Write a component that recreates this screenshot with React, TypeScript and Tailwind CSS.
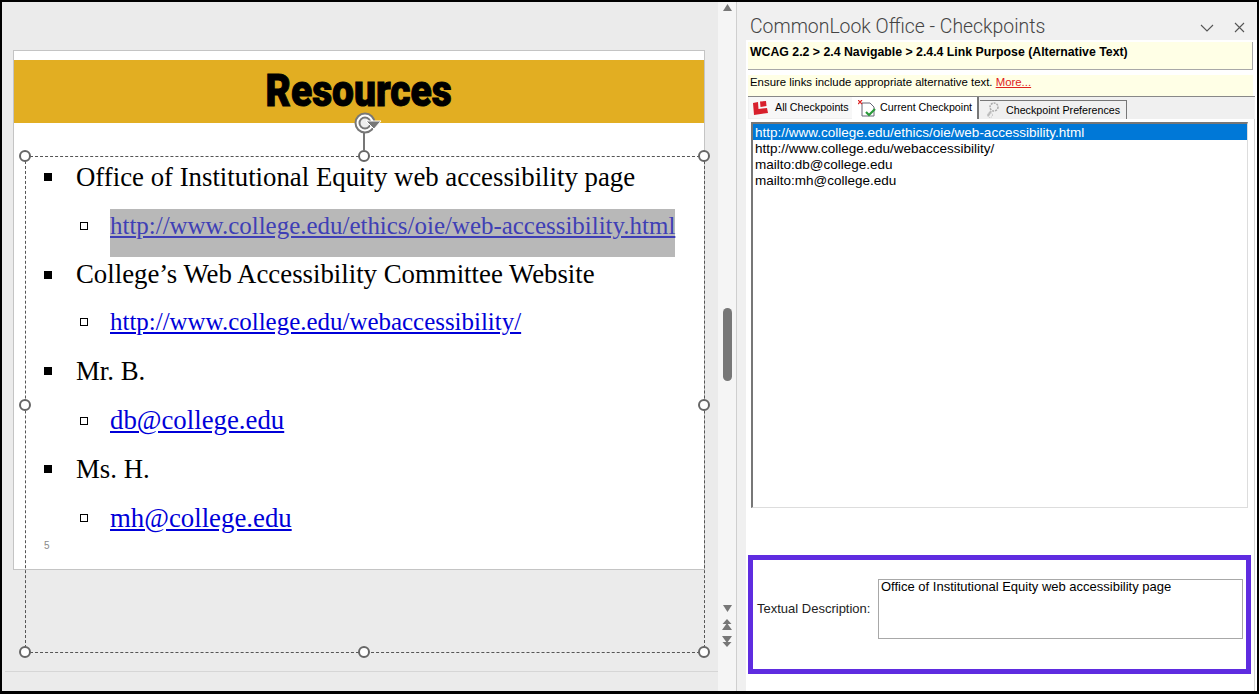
const handles = [
  "left-[-7px] top-[-7px]",
  "left-[332px] top-[-7px]",
  "right-[-6px] top-[-7px]",
  "left-[-7px] top-[242px]",
  "right-[-6px] top-[242px]",
  "left-[-7px] bottom-[-6px]",
  "left-[332px] bottom-[-6px]",
  "right-[-6px] bottom-[-6px]",
];

function L1({ children, h = "h-[48.7px]" }: { children: React.ReactNode; h?: string }) {
  return (
    <div className={h + " flex items-center pl-[30px] text-[26.8px]"}>
      <span className="w-2 h-2 bg-black mr-[24px] shrink-0" />
      <span className="whitespace-nowrap">{children}</span>
    </div>
  );
}

function L2({ children, small, h = "h-[48.7px]" }: { children: React.ReactNode; small?: boolean; h?: string }) {
  return (
    <div className={h + " flex items-center pl-[66px]"}>
      <span className="w-[8px] h-[8px] border-[1.5px] border-black mr-[22px] shrink-0 bg-white" />
      <span className={small ? "text-[#0000d8] underline text-[24.95px] whitespace-nowrap" : "text-[#0000d8] underline text-[26.8px] whitespace-nowrap"}>
        {children}
      </span>
    </div>
  );
}

function SelectedLink({ children }: { children: React.ReactNode }) {
  return (
    <div className="h-[48.7px] flex items-start pl-[66px]">
      <span className="w-[8px] h-[8px] border-[1.5px] border-black mr-[22px] mt-[20px] shrink-0 bg-white" />
      <span className="mt-[7px] h-[48px] w-[565px] pt-[5px] bg-[#b8b8b8] text-[#3f3fb5] underline text-[24.95px] leading-[24px] whitespace-nowrap">
        {children}
      </span>
    </div>
  );
}

const rows = [
  "http://www.college.edu/webaccessibility/",
  "mailto:db@college.edu",
  "mailto:mh@college.edu",
];

export default function App() {
  return (
    <div className="w-[1259px] h-[694px] bg-black pt-[2px] pl-[2px] pr-[2px] pb-[3px] overflow-hidden">
      <div className="h-full flex font-['Liberation_Sans',sans-serif]">
        <div className="w-[716px] h-full bg-[#ebebeb] flex flex-col">
          <div className="flex-1 pl-[11px] pt-[48px]">
            <div className="relative w-[692px] h-[520px] bg-white border border-[#c4c4c4] pt-[9px]">
              <div className="h-[63px] bg-[#e2ae22] flex items-center justify-center pb-[3px]">
                <span className="font-['Roboto',sans-serif] font-black text-[45px] leading-none text-black scale-x-[0.865] [-webkit-text-stroke:1px_black]">
                  Resources
                </span>
              </div>
              <div className="pt-[30px] font-['Liberation_Serif',serif] leading-none text-black">
                <L1>Office of Institutional Equity web accessibility page</L1>
                <SelectedLink>http://www.college.edu/ethics/oie/web-accessibility.html</SelectedLink>
                <L1>College’s Web Accessibility Committee Website</L1>
                <L2 small h="h-[46.7px]">http://www.college.edu/webaccessibility/</L2>
                <L1 h="h-[50.7px]">Mr. B.</L1>
                <L2>db@college.edu</L2>
                <L1>Ms. H.</L1>
                <L2>mh@college.edu</L2>
              </div>
              <div className="absolute left-[30px] top-[487px] text-[10px] text-[#8a8a8a]">5</div>

              <div className="absolute left-[11px] top-[105px] w-[680px] h-[497px] border border-dashed border-[#555]">
                {handles.map((h) => (
                  <span key={h} className={"absolute w-[12px] h-[12px] rounded-full bg-white border-2 border-[#666] " + h} />
                ))}
                <span className="absolute left-[337px] top-[-25px] w-[2px] h-[19px] bg-[#777]" />
                <svg className="absolute left-[328px] top-[-45px]" width="28" height="22" viewBox="0 0 28 22" fill="none">
                  <circle cx="11" cy="11" r="9.5" stroke="#777" strokeWidth="2" fill="#fff" />
                  <circle cx="11" cy="11" r="5.5" stroke="#777" strokeWidth="2" fill="#eee" />
                  <path d="M12 9h15l-7 8z" fill="#777" stroke="#fff" strokeWidth="1" />
                </svg>
              </div>
            </div>
          </div>
          <div className="h-[20px] ml-[3px] border-t border-[#d6d6d6]" />
        </div>

        <div className="w-[19px] h-full bg-[#f5f5f5] flex flex-col items-center border-r border-[#cfcfcf]">
          <svg className="mt-[2px]" width="9" height="7" viewBox="0 0 9 7"><path d="M4.5 0L9 7H0z" fill="#777" /></svg>
          <div className="mt-[297px] w-[9px] h-[73px] rounded-full bg-[#777]" />
          <svg className="mt-[224px]" width="9" height="7" viewBox="0 0 9 7"><path d="M0 0h9L4.5 7z" fill="#777" /></svg>
          <svg className="mt-[7px]" width="10" height="11" viewBox="0 0 10 11"><path d="M5 0L9.5 5H.5zM5 4L10 11H0z" fill="#777" /></svg>
          <svg className="mt-[6px]" width="10" height="11" viewBox="0 0 10 11"><path d="M0 0h10L5 7zM.5 6h9L5 11z" fill="#777" /></svg>
        </div>

        <div className="w-[9px] h-full bg-[#f0f0f0]" />

        <div className="flex-1 h-full bg-white flex flex-col overflow-hidden">
          <div className="h-[38px] shrink-0 bg-[#f0f0f0] flex items-center pl-[4px] pt-[12px] font-['Roboto',sans-serif] font-light text-[19.4px] text-[#444] relative">
            <span>CommonLook Office - Checkpoints</span>
            <svg className="absolute left-[454px] top-[22px]" width="14" height="9" viewBox="0 0 14 9" fill="none"><path d="M1 1l6 6 6-6" stroke="#555" strokeWidth="1.1" /></svg>
            <svg className="absolute left-[488px] top-[20px]" width="11" height="11" viewBox="0 0 11 11" fill="none"><path d="M1 1l9 9M10 1l-9 9" stroke="#555" strokeWidth="1.1" /></svg>
          </div>
          <div className="h-[28px] shrink-0 mt-[2px] ml-[2px] w-[505px] bg-[#ffffe6] border-b border-r border-[#a8a8a8] pl-[2px] pt-[2px] text-[12.3px] leading-[16px] font-bold text-black">
            WCAG 2.2 &gt; 2.4 Navigable &gt; 2.4.4 Link Purpose (Alternative Text)
          </div>
          <div className="h-[21px] shrink-0 mt-[5px] ml-[2px] w-[505px] bg-[#ffffe6] pl-[2px] pb-[6px] flex items-center text-[11.4px] text-black">
            Ensure links include appropriate alternative text.&nbsp;<span className="text-[#e0201c] underline">More...</span>
          </div>

          <div className="h-[23px] w-[507px] shrink-0 flex items-end border-t border-[#888] ml-[2px] bg-[#f0f0f0] text-[10.7px] text-black">
            <div className="h-[21px] mb-[1px] ml-[1px] w-[103px] flex items-center bg-[#f7f7f7] pl-[3px] gap-[7px]">
              <svg width="16" height="14" viewBox="0 0 16 14"><path d="M1 2l5-1 .5 7 8.5-1 1 5-14 2zM8 .5l6-.5.5 5L8.5 6z" fill="#d8202c" /></svg>
              <span className="whitespace-nowrap">All Checkpoints</span>
            </div>
            <div className="h-[22px] w-[127px] flex items-center bg-white border-r-2 border-[#777] pl-[6px] gap-[4px]">
              <svg width="18" height="17" viewBox="0 0 18 17" fill="none">
                <path d="M4 3h8l4 4v9H4z" stroke="#667" strokeWidth="1" fill="#fff" />
                <path d="M0 0l4 4M4 0L0 4" stroke="#d22" strokeWidth="1.2" />
                <path d="M8 12l3 3 6-6" stroke="#2a9a3a" strokeWidth="2.2" />
              </svg>
              <span className="whitespace-nowrap mb-[2px]">Current Checkpoint</span>
            </div>
            <div className="h-[19px] w-[147px] ml-[1px] flex items-center bg-[#f0f0f0] border-r border-t border-[#777] pl-[6px] gap-[6px]">
              <svg width="14" height="17" viewBox="0 0 14 17" fill="none">
                <circle cx="8" cy="5" r="4" stroke="#aaa" strokeWidth="1.5" strokeDasharray="2 1" />
                <path d="M5 9l-3 5" stroke="#bbb" strokeWidth="2" />
                <circle cx="4" cy="13" r="2.5" stroke="#bbb" strokeWidth="1" strokeDasharray="1 1" />
              </svg>
              <span className="whitespace-nowrap">Checkpoint Preferences</span>
            </div>
          </div>

          <div className="w-[509px] flex-1 border-r border-[#d4d4d4]">
            <div className="h-[386px] w-[497px] mt-[3px] ml-[5px] border-l-2 border-t-2 border-[#777] border-r border-b border-r-[#ddd] border-b-[#ddd] text-[13.5px] leading-[16px] text-black">
              <div className="h-4 pt-[1px] bg-[#0078d7] text-white pl-[2px]">http://www.college.edu/ethics/oie/web-accessibility.html</div>
              {rows.map((r) => (
                <div key={r} className="h-4 pt-[1px] pl-[2px]">{r}</div>
              ))}
            </div>

            <div className="mt-[47px] h-[119px] w-[503px] ml-[2px] border-[5px] border-[#5f2ce0] flex items-center pl-[4px] pb-[12px] text-[13px] text-black">
              <span className="w-[121px] shrink-0 text-[#222]">Textual Description:</span>
              <div className="w-[365px] h-[60px] border border-[#a8a8a8] pl-[2px] leading-[14px]">Office of Institutional Equity web accessibility page</div>
            </div>
          </div>
        </div>
      </div>
    </div>
  );
}
